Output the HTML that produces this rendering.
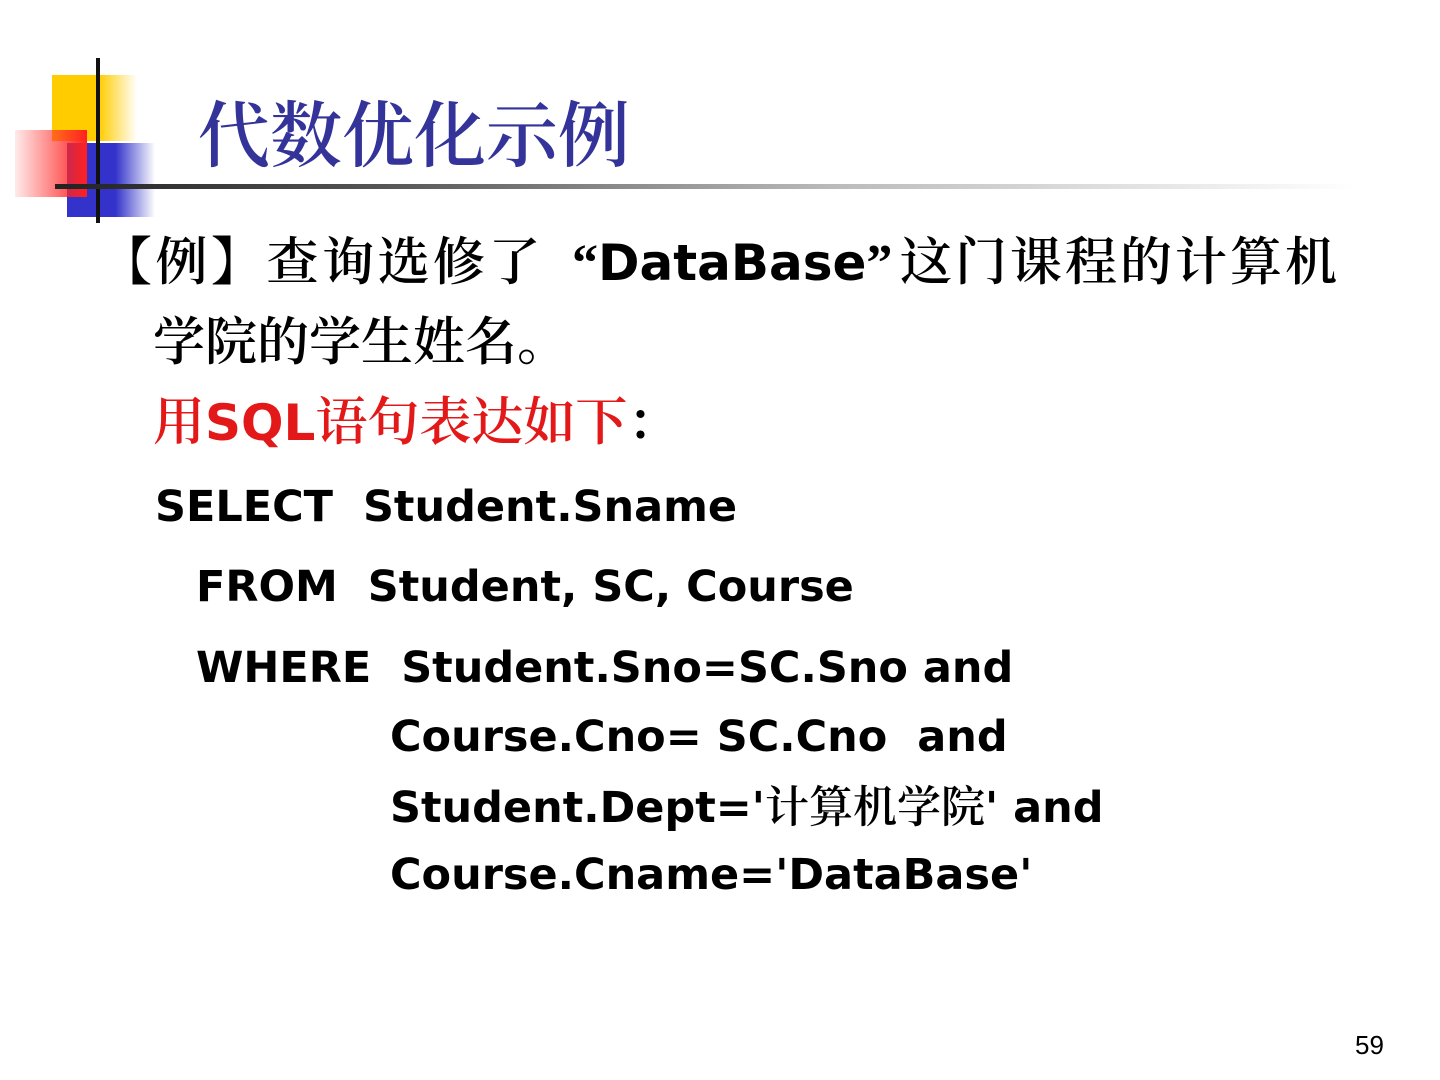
<!DOCTYPE html>
<html><head><meta charset="utf-8"><style>
body{margin:0;width:1440px;height:1080px;background:#fff;position:relative;overflow:hidden}
.a{position:absolute;white-space:pre;line-height:1}
.cn{font-family:"Noto Serif CJK SC","Liberation Serif",serif;font-size:52px;color:#000;font-weight:600}
.en{font-family:"DejaVu Sans","Liberation Sans",sans-serif;font-weight:bold;font-size:43px;color:#000}
.b{font-family:"DejaVu Sans","Liberation Sans",sans-serif;font-weight:bold;font-size:50px;letter-spacing:0}
.q{font-family:"Liberation Serif",serif;font-weight:bold}
</style></head><body>
<div class="a" style="left:52px;top:75px;width:85px;height:66px;background:linear-gradient(to right,#ffcc00 55%,rgba(255,204,0,0))"></div>
<div class="a" style="left:67px;top:143px;width:88px;height:74px;background:linear-gradient(to right,#3333cc 55%,rgba(51,51,204,0))"></div>
<div class="a" style="left:15px;top:130px;width:72px;height:67px;background:linear-gradient(to left,#ff2020,rgba(255,120,120,0.15))"></div>
<div class="a" style="left:96px;top:58px;width:4px;height:165px;background:#111"></div>
<div class="a" style="left:55px;top:184px;width:1300px;height:5px;background:linear-gradient(to right,#222 0%,#555 25%,#bbb 60%,rgba(255,255,255,0) 100%)"></div>
<div class="a" style="left:198px;top:94px;font-family:'Noto Serif CJK SC',serif;font-size:72px;color:#333399;font-weight:600">代数优化示例</div>
<div class="a cn" style="left:100px;top:232px;letter-spacing:3.5px">【例】查询选修了</div>
<div class="a cn" style="left:572px;top:232px"><span class="q">“</span><span class="b">DataBase</span><span class="q">”</span></div>
<div class="a cn" style="left:900px;top:232px;letter-spacing:3px">这门课程的计算机</div>
<div class="a cn" style="left:153px;top:312px">学院的学生姓名。</div>
<div class="a cn" style="left:153px;top:392px;color:#e31919">用<span class="b">SQL</span>语句表达如下<span style="color:#000">：</span></div>
<div class="a en" style="left:155px;top:486px">SELECT  Student.Sname</div>
<div class="a en" style="left:196px;top:566px">FROM  Student, SC, Course</div>
<div class="a en" style="left:196px;top:647px">WHERE  Student.Sno=SC.Sno and</div>
<div class="a en" style="left:390px;top:716px">Course.Cno= SC.Cno  and</div>
<div class="a en" style="left:390px;top:781px">Student.Dept='<span style="font-family:'Noto Serif CJK SC',serif;font-weight:600;font-size:44px">计算机学院</span>' and</div>
<div class="a en" style="left:390px;top:854px">Course.Cname='DataBase'</div>
<div class="a" style="left:1355px;top:1032px;font-family:'Liberation Sans',sans-serif;font-size:26px;color:#000">59</div>
</body></html>
